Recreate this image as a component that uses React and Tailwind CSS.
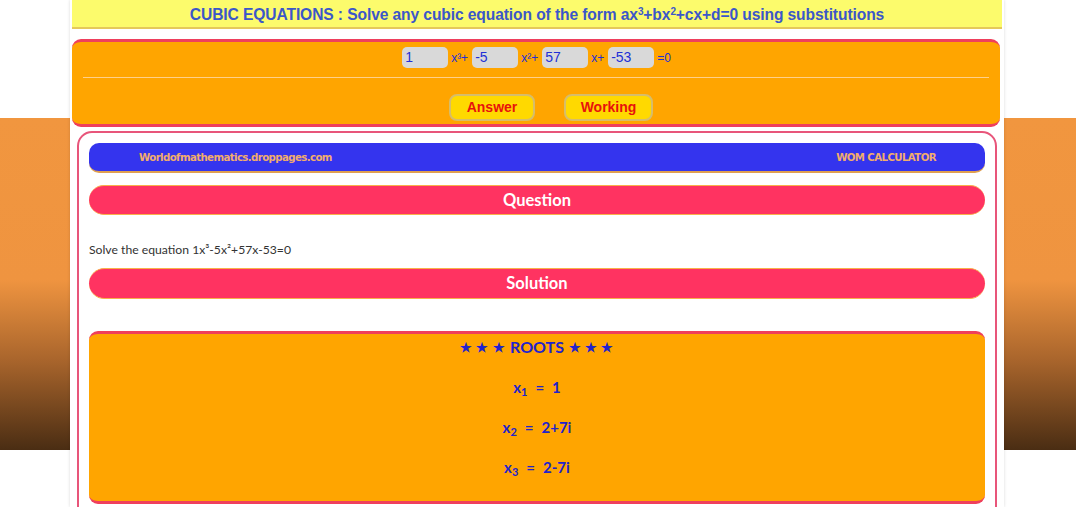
import React from "react";

const inputs = [
  { value: "1", label: "x³+" },
  { value: "-5", label: "x²+" },
  { value: "57", label: "x+" },
  { value: "-53", label: "=0" },
];

const roots = [
  { sub: "1", val: "1" },
  { sub: "2", val: "2+7i" },
  { sub: "3", val: "2-7i" },
];

export default function App() {
  return (
    <div className="h-[507px] overflow-hidden bg-[linear-gradient(to_bottom,#ffffff_118px,#f1963f_118px,#ef9440_280px,#a9652c_360px,#4a2d13_450px,#ffffff_450px)] font-['Liberation_Sans',Arial,sans-serif]">
      {/* center column */}
      <div className="ml-[70px] w-[934px] h-full bg-white shadow-[0_0_3px_rgba(0,0,0,0.15)] px-[2px]">
        {/* title bar */}
        <div className="h-[29px] bg-[#fcfb6c] border-b-2 border-[#e5c95a] flex items-center justify-center pt-[3px]">
          <h1 className="text-[15.6px] font-bold text-[#3b57c9] tracking-[-0.1px]">
            CUBIC EQUATIONS : Solve any cubic equation of the form ax<sup className="text-[10px]">3</sup>+bx<sup className="text-[10px]">2</sup>+cx+d=0 using substitutions
          </h1>
        </div>

        {/* input panel */}
        <div className="mt-[10px] mr-[2px] h-[88px] bg-[#ffa500] border-y-[3px] border-[#ef3f5c] rounded-[9px] flex flex-col">
          <div className="h-[31px] flex items-center justify-center gap-[3px] pl-[2px] text-[14px] text-[#2130d6]">
            {inputs.map((it) => (
              <React.Fragment key={it.value}>
                <span className="w-[46px] h-[21px] rounded-[5px] bg-[#d9d9d9] px-[3px] leading-[21px]">
                  {it.value}
                </span>
                <span className="text-[12px] mr-[1px]">{it.label}</span>
              </React.Fragment>
            ))}
          </div>
          <div className="mx-[11px] mt-[4px] h-px bg-[#ffd08a]" />
          <div className="flex-1 flex items-center justify-center gap-[29px] pt-[13px] pl-[30px]">
            <button className="w-[86px] h-[27px] rounded-[8px] bg-[#ffd900] border-2 border-[#d6bd6a] text-[14px] font-bold text-[#e8120c]">
              Answer
            </button>
            <button className="w-[89px] h-[27px] rounded-[8px] bg-[#ffd900] border-2 border-[#d6bd6a] text-[14px] font-bold text-[#e8120c]">
              Working
            </button>
          </div>
        </div>

        {/* output card */}
        <div className="mt-[4px] mx-[5px] h-[400px] rounded-[15px] border-2 border-[#e8557a] px-[10px] pt-[10px]">
          <div className="h-[30px] rounded-[10px] bg-[#3434ee] border-b-2 border-[#e0a050] flex items-center justify-between pl-[50px] pr-[49px] pt-[2px] font-['DejaVu_Sans',sans-serif] text-[10.2px] font-bold text-[#f2ad6c] tracking-[-0.6px]">
            <span>Worldofmathematics.droppages.com</span>
            <span>WOM CALCULATOR</span>
          </div>

          <div className="mt-[12px] h-[30px] rounded-full bg-[#ff3361] border-y border-[#f8b04a] flex items-center justify-center text-white font-bold text-[16.5px] font-['Lato',sans-serif]">
            Question
          </div>

          <p className="mt-[26px] text-[12.2px] text-[#333] font-['Lato',sans-serif]">
            Solve the equation 1x³-5x²+57x-53=0
          </p>

          <div className="mt-[9px] h-[31px] rounded-full bg-[#ff3361] border-y border-[#f8b04a] flex items-center justify-center text-white font-bold text-[16.5px] font-['Lato',sans-serif]">
            Solution
          </div>

          <div className="mt-[32px] h-[173px] rounded-[9px] bg-[#ffa500] border-y-[3px] border-[#ef3f5c] flex flex-col items-center pt-[2px] text-[#2222cc] font-bold font-['Lato',sans-serif] text-[15px]">
            <div className="h-[22px] flex items-center gap-[5px] text-[16px]">
              <span className="text-[13px] tracking-[0.5px]">★ ★ ★</span>
              <span>ROOTS</span>
              <span className="text-[13px] tracking-[0.5px]">★ ★ ★</span>
            </div>
            <div className="flex flex-col items-center gap-[18px] mt-[18px]">
              {roots.map((r) => (
                <div key={r.sub} className="h-[22px] flex items-center gap-[8px]">
                  <span>
                    x<sub className="text-[11px]">{r.sub}</sub>
                  </span>
                  <span>=</span>
                  <span>{r.val}</span>
                </div>
              ))}
            </div>
          </div>
        </div>
      </div>
    </div>
  );
}
